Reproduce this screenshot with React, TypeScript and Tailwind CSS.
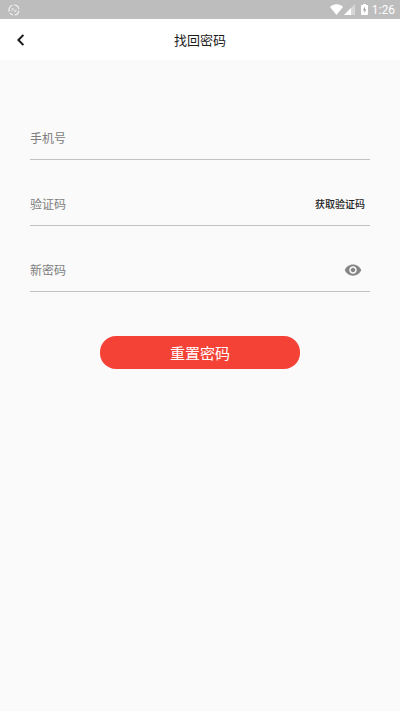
import { useState, type ReactNode } from 'react'
import { MdVisibility } from 'react-icons/md'

interface FieldProps {
  id: string
  label: string
  type?: string
  children?: ReactNode
}

function StatusBar() {
  return (
    <div className="flex h-[19px] items-center justify-between bg-[#bdbdbd] pl-2 pr-[5px] text-white">
      <svg viewBox="0 0 12 12" className="h-3 w-3" fill="none" stroke="currentColor" aria-hidden="true">
        <path d="M1.2 7.6A5 5 0 0 1 4.4 1.3M5.8 1A5 5 0 0 1 10.9 5M10.9 6.6A5 5 0 0 1 6.6 11M5 10.9A5 5 0 0 1 2 9" strokeWidth="1.2" opacity="0.8" />
        <path d="M3.4 7.2c0-2 1.6-2.8 2.2-1.2s2.4 1 2.8-1M3.6 4.6h2M6.4 7.6h2" strokeWidth="0.8" opacity="0.7" />
      </svg>
      <div className="flex items-center">
        <svg viewBox="0 0 13 11" className="h-[11px] w-[13px]" fill="currentColor" aria-hidden="true">
          <path d="M6.5 11 0 3C1.6 1.2 3.8 0.2 6.5 0.2S11.4 1.2 13 3z" />
        </svg>
        <svg viewBox="0 0 11 11" className="ml-px h-[11px] w-[11px]" aria-hidden="true">
          <path d="M0 11 11 0v11z" fill="currentColor" opacity="0.4" />
          <path d="M0 11 7 4V11z" fill="currentColor" />
        </svg>
        <svg viewBox="0 0 7 11" className="ml-1.5 h-[11px] w-[7px]" aria-hidden="true">
          <path d="M2 0h3v1h1.4c.3 0 .6.3.6.6v8.6c0 .4-.3.8-.8.8H.8c-.5 0-.8-.4-.8-.8V1.6c0-.3.3-.6.6-.6H2z" fill="currentColor" />
          <path d="M4 2.6 1.8 6.2h1.5v2.8l2-3.6H4z" fill="#a3a3a3" />
        </svg>
        <span className="ml-1 font-[Roboto,sans-serif] text-[12px] leading-4">1:26</span>
      </div>
    </div>
  )
}

function Field({ id, label, type = 'text', children }: FieldProps) {
  return (
    <div className="flex h-11 items-center border-b border-[#c2c2c2]">
      <input
        id={id}
        type={type}
        aria-label={label}
        placeholder={label}
        className="h-full min-w-0 flex-1 bg-transparent text-[12px] text-black/80 outline-none placeholder:text-[#7d7d7d]"
      />
      {children}
    </div>
  )
}

export default function App() {
  const [showPassword, setShowPassword] = useState(false)

  return (
    <div className="min-h-screen bg-[#fafafa] font-['Noto_Sans_CJK_SC',sans-serif]">
      <StatusBar />
      <header className="grid h-[41px] grid-cols-[40px_1fr_40px] items-center bg-white">
        <button type="button" aria-label="返回" className="flex h-full items-center justify-center text-[#1c1c1c]">
          <svg viewBox="0 0 8 12" className="h-3 w-2" fill="none" stroke="currentColor" strokeWidth="2" aria-hidden="true">
            <path d="M7.4 1 2.4 6l5 5" />
          </svg>
        </button>
        <h1 className="text-center text-[13px] leading-5 text-[#1c1c1c]">找回密码</h1>
      </header>

      <form className="px-[30px] pt-14" onSubmit={(e) => e.preventDefault()}>
        <div className="flex flex-col gap-[22px]">
          <Field id="phone" label="手机号" />
          <Field id="code" label="验证码">
            <button type="button" className="pr-[5px] text-[10px] font-medium leading-4 text-[#1c1c1c]">
              获取验证码
            </button>
          </Field>
          <Field id="password" label="新密码" type={showPassword ? 'text' : 'password'}>
            <button
              type="button"
              aria-label="显示密码"
              className="pr-2 text-[#858585]"
              onClick={() => setShowPassword(!showPassword)}
            >
              <MdVisibility className="h-[18px] w-[18px]" />
            </button>
          </Field>
        </div>
        <button
          type="submit"
          className="mx-auto mt-11 block h-[33px] w-[200px] rounded-2xl bg-[#f44336] text-[15px] leading-5 text-white"
        >
          重置密码
        </button>
      </form>
    </div>
  )
}
